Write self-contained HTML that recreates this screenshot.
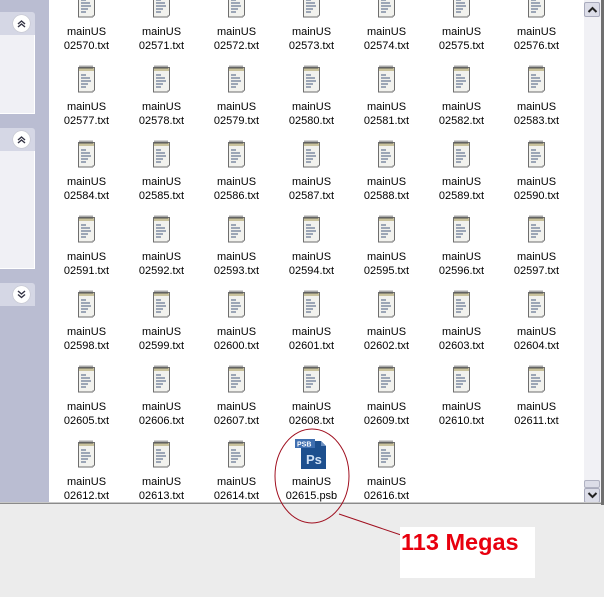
<!DOCTYPE html>
<html><head><meta charset="utf-8"><style>
body{margin:0;width:604px;height:597px;background:#ececec;position:relative;overflow:hidden;font-family:"Liberation Sans",Tahoma,sans-serif}
#win{position:absolute;left:0;top:0;width:601px;height:503px;background:#fff;overflow:hidden;border-bottom:1px solid #8a8a8a}
#win:after{content:"";position:absolute;left:0;right:0;bottom:0;height:1px;background:#c8c8c8}
#rb{position:absolute;left:601px;top:0;width:3px;height:505px;background:#6f6f6f}
#left{position:absolute;left:0;top:0;width:49px;height:503px;background:#babdd2}
.hd{position:absolute;left:0;width:35px;height:23px;background:#d5d7e5;border-radius:0 3px 0 0}
.bd{position:absolute;left:0;width:34px;background:#f0f0f5;border-right:1px solid #fff;border-bottom:1px solid #fff}
.btn{position:absolute;left:13px;top:3px;width:17px;height:17px;border-radius:50%;background:#fff;box-shadow:0 0 1px #999}
.cell{position:absolute;width:75px;height:75px;text-align:center;font-size:11px;color:#000}
.cell svg{position:absolute;left:28px;top:2px}
.cell .l{position:absolute;left:0;top:38px;width:75px;line-height:14px}
#sb{position:absolute;left:584px;top:0;width:17px;height:503px;background:#f1f1f5}
.ar{position:absolute;left:0;width:16px;height:15px;background:#dcdde8;border:1px solid #a9abbd;border-radius:2px;box-sizing:border-box}
</style></head><body>
<svg width="0" height="0" style="position:absolute"><defs>
<symbol id="n" viewBox="0 0 20 29">
<path d="M1.5 3.5 H17.5 V26 L15.5 28 H1.5 Z" fill="#f2f2ee" stroke="#6e6e6e"/>
<path d="M2 4 H17 V7 H2Z" fill="#c9c29c"/>
<path d="M3 1.5v3.5M5 1.5v3.5M7 1.5v3.5M9 1.5v3.5M11 1.5v3.5M13 1.5v3.5M15 1.5v3.5" stroke="#555" stroke-width="1"/>
<path d="M4 11h5M4 14h9M4 17h10M4 20h7M4 23h5" stroke="#6a7a95" stroke-width="1.2"/>
<path d="M17.5 26 L15.5 28 V26Z" fill="#aaa"/>
</symbol>
</defs></svg>
<div id="win">
<div id="left">
<div class="hd" style="top:12px"><div class="btn"><svg width="17" height="17"><path d="M5 9l3.5-3 3.5 3M5 12l3.5-3 3.5 3" fill="none" stroke="#334" stroke-width="1.4"/></svg></div></div>
<div class="bd" style="top:35px;height:78px"></div>
<div class="hd" style="top:128px"><div class="btn"><svg width="17" height="17"><path d="M5 9l3.5-3 3.5 3M5 12l3.5-3 3.5 3" fill="none" stroke="#334" stroke-width="1.4"/></svg></div></div>
<div class="bd" style="top:151px;height:117px"></div>
<div class="hd" style="top:283px"><div class="btn"><svg width="17" height="17"><path d="M5 5l3.5 3 3.5-3M5 8.5l3.5 3 3.5-3" fill="none" stroke="#334" stroke-width="1.4"/></svg></div></div>
</div>
<div id="grid"></div>
<div id="sb">
<div class="ar" style="top:2px"><svg width="15" height="13"><path d="M3.5 9l4-4 4 4" fill="none" stroke="#222" stroke-width="2"/></svg></div>
<div style="position:absolute;left:0;top:480px;width:16px;height:8px;background:#dcdde8;border:1px solid #b0b2c2;border-radius:2px;box-sizing:border-box"></div>
<div class="ar" style="top:488px"><svg width="15" height="13"><path d="M3.5 4l4 4 4-4" fill="none" stroke="#222" stroke-width="2"/></svg></div>
</div>
</div>
<div id="rb"></div>
<script>
var g=document.getElementById('grid'),h='';
for(var i=0;i<47;i++){var r=Math.floor(i/7),c=i%7,num=2570+i;
var x=49+c*75,y=-13+r*75;
var ic,ext='txt';
if(num==2615){ext='psb';ic='<svg width="34" height="32" viewBox="0 0 34 32" style="left:19px;top:1px"><path d="M8 3H28L33 8V31H8Z" fill="#1d4f8e"/><path d="M28 3V8H33Z" fill="#6b8fc0"/><rect x="2" y="1" width="20" height="9" fill="#3f6fb0"/><text x="4" y="8.5" font-size="7" font-weight="bold" fill="#fff" font-family="Liberation Sans">PSB</text><text x="13" y="26" font-size="13" font-weight="bold" fill="#cfe0f5" font-family="Liberation Sans">Ps</text></svg>';}
else ic='<svg width="20" height="29"><use href="#n"/></svg>';
h+='<div class="cell" style="left:'+x+'px;top:'+y+'px">'+ic+'<div class="l">mainUS<br>0'+num+'.'+ext+'</div></div>';}
g.innerHTML=h;
</script>
<svg width="604" height="597" style="position:absolute;left:0;top:0">
<ellipse cx="312" cy="476" rx="37" ry="47" fill="none" stroke="#a01020" stroke-width="1"/>
<line x1="339" y1="514" x2="401" y2="535" stroke="#a01020" stroke-width="1"/>
</svg>
<div style="position:absolute;left:400px;top:527px;width:135px;height:51px;background:#fff"></div>
<div style="position:absolute;left:401px;top:528px;font-size:23.5px;font-weight:bold;color:#e8000e;line-height:28px">113 Megas</div>
</body></html>
